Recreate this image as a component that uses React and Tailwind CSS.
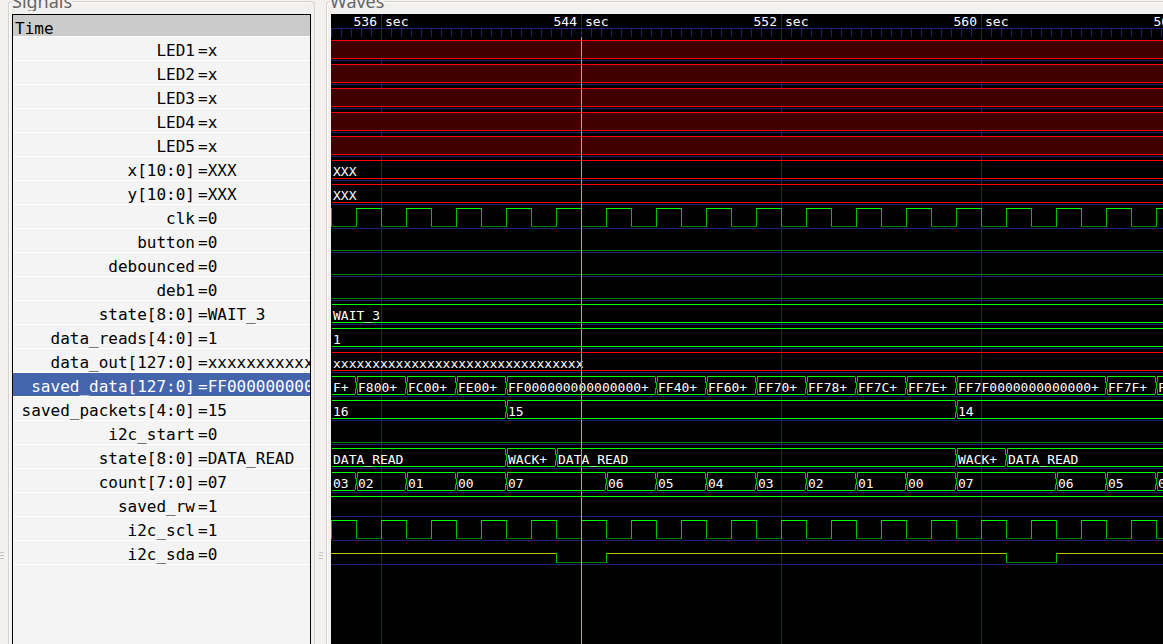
const STEP = 25;
const END = 1700;

const bus = (...segments) => ({ kind: "bus", segments });

const signals = [
  { name: "LED1", value: "x", wave: { kind: "unknown" } },
  { name: "LED2", value: "x", wave: { kind: "unknown" } },
  { name: "LED3", value: "x", wave: { kind: "unknown" } },
  { name: "LED4", value: "x", wave: { kind: "unknown" } },
  { name: "LED5", value: "x", wave: { kind: "unknown" } },
  { name: "x[10:0]", value: "XXX", wave: { ...bus([0, "XXX"]), undef: true } },
  { name: "y[10:0]", value: "XXX", wave: { ...bus([0, "XXX"]), undef: true } },
  { name: "clk", value: "0", wave: { kind: "clock", phase: 0 } },
  { name: "button", value: "0", wave: { kind: "low" } },
  { name: "debounced", value: "0", wave: { kind: "low" } },
  { name: "deb1", value: "0", wave: { kind: "low" } },
  { name: "state[8:0]", value: "WAIT_3", wave: bus([0, "WAIT_3"]) },
  { name: "data_reads[4:0]", value: "1", wave: bus([0, "1"]) },
  {
    name: "data_out[127:0]",
    value: "xxxxxxxxxxx",
    wave: { ...bus([0, "x".repeat(32)]), undef: true },
  },
  {
    name: "saved_data[127:0]",
    value: "FF000000000",
    selected: true,
    wave: bus(
      [0, "F+"],
      [25, "F800+"],
      [75, "FC00+"],
      [125, "FE00+"],
      [175, "FF000000000000000+"],
      [325, "FF40+"],
      [375, "FF60+"],
      [425, "FF70+"],
      [475, "FF78+"],
      [525, "FF7C+"],
      [575, "FF7E+"],
      [625, "FF7F0000000000000+"],
      [775, "FF7F+"],
      [825, "FF7F+"]
    ),
  },
  { name: "saved_packets[4:0]", value: "15", wave: bus([0, "16"], [175, "15"], [625, "14"]) },
  { name: "i2c_start", value: "0", wave: { kind: "low" } },
  {
    name: "state[8:0]",
    value: "DATA_READ",
    wave: bus([0, "DATA_READ"], [175, "WACK+"], [225, "DATA_READ"], [625, "WACK+"], [675, "DATA_READ"]),
  },
  {
    name: "count[7:0]",
    value: "07",
    wave: bus(
      [0, "03"],
      [25, "02"],
      [75, "01"],
      [125, "00"],
      [175, "07"],
      [275, "06"],
      [325, "05"],
      [375, "04"],
      [425, "03"],
      [475, "02"],
      [525, "01"],
      [575, "00"],
      [625, "07"],
      [725, "06"],
      [775, "05"],
      [825, "04"]
    ),
  },
  { name: "saved_rw", value: "1", wave: { kind: "high" } },
  { name: "i2c_scl", value: "1", wave: { kind: "clock", phase: 1 } },
  { name: "i2c_sda", value: "0", wave: { kind: "tristate", lows: [[225, 275], [675, 725]] } },
];

const H = ({ x1, x2, y, c }) => <rect x={x1} y={y} width={x2 - x1} height="1" fill={c} />;
const V = ({ x, y1, y2, c }) => <rect x={x} y={y1} width="1" height={y2 - y1} fill={c} />;

function Trace({ wave }) {
  switch (wave.kind) {
    case "unknown":
      return (
        <>
          <rect x="0" y="3" width={END} height="18" fill="#400000" />
          <H x1={0} x2={END} y={3} c="#ff0000" />
          <H x1={0} x2={END} y={21} c="#ff0000" />
        </>
      );
    case "low":
      return <H x1={0} x2={END} y={21} c="#008000" />;
    case "high":
      return <H x1={0} x2={END} y={3} c="#00ff00" />;
    case "clock":
      return Array.from({ length: END / STEP }, (_, i) => {
        const high = (i + wave.phase) % 2 === 1;
        return (
          <g key={i}>
            <V x={i * STEP} y1={3} y2={22} c="#00c000" />
            <H x1={i * STEP} x2={(i + 1) * STEP} y={high ? 3 : 21} c={high ? "#00ff00" : "#008000"} />
          </g>
        );
      });
    case "tristate": {
      let from = 0;
      const parts = [];
      wave.lows.forEach(([a, b]) => {
        parts.push(
          <g key={a}>
            <H x1={from} x2={a} y={12} c="#c0c000" />
            <H x1={a} x2={b} y={21} c="#008000" />
            <V x={a} y1={12} y2={22} c="#00c000" />
            <V x={b} y1={12} y2={22} c="#00c000" />
          </g>
        );
        from = b + 1;
      });
      return (
        <>
          {parts}
          <H x1={from} x2={END} y={12} c="#c0c000" />
        </>
      );
    }
    default: {
      const c = wave.undef ? "#ff0000" : "#00ff00";
      return wave.segments.map(([x], i) => {
        const next = wave.segments[i + 1];
        const x1 = i === 0 ? 1 : x + 2;
        const x2 = next ? next[0] - 1 : END;
        return (
          <g key={x}>
            <H x1={x1} x2={x2} y={3} c={c} />
            <H x1={x1} x2={x2} y={21} c={c} />
            {i > 0 && (
              <path
                d={`M${x - 1} 3.5L${x + 2} 21.5M${x + 2} 3.5L${x - 1} 21.5`}
                stroke="#00c000"
                fill="none"
                shapeRendering="crispEdges"
              />
            )}
          </g>
        );
      });
    }
  }
}

function WaveRow({ wave }) {
  const segments = wave.kind === "bus" ? wave.segments : [];
  return (
    <div className="relative h-6">
      <svg className="absolute inset-0 h-full w-full" aria-hidden="true">
        <H x1={0} x2={END} y={23} c="#202070" />
        <Trace wave={wave} />
      </svg>
      <div className="relative flex h-full overflow-hidden">
        {segments.map(([x, label], i) => {
          const next = segments[i + 1];
          return (
            <span
              key={x}
              className="shrink-0 pt-[5px] pl-0.5 leading-5 whitespace-nowrap"
              style={{ width: (next ? next[0] : END) - x }}
            >
              {label}
            </span>
          );
        })}
      </div>
    </div>
  );
}

const times = [536, 544, 552, 560, 568];

function TimeRuler() {
  return (
    <div className="relative h-[23px]">
      <svg className="absolute inset-0 h-full w-full" aria-hidden="true">
        <H x1={0} x2={END} y={14} c="#202070" />
        {Array.from({ length: END / 10 }, (_, i) => (
          <V key={i} x={i * 10} y1={14} y2={23} c="#202070" />
        ))}
      </svg>
      <div className="relative -ml-[50px] flex">
        {times.map((t) => (
          <div key={t} className="flex w-[200px] shrink-0 leading-4">
            <span className="w-24 text-right">{t}</span>
            <span className="pl-2">sec</span>
          </div>
        ))}
      </div>
    </div>
  );
}

function Grip() {
  return (
    <div className="flex w-1 flex-col gap-0.5" aria-hidden="true">
      <div className="h-px bg-[#c4c3c1]" />
      <div className="h-px bg-[#c4c3c1]" />
      <div className="h-px bg-[#c4c3c1]" />
    </div>
  );
}

function Title({ children }) {
  return (
    <h2 className="z-10 -mt-[11px] h-[22px] overflow-hidden pl-1 font-['Noto_Sans',sans-serif] text-[18px] leading-6 text-[#666]">
      <span className="bg-[#f2f1f0]">{children}</span>
    </h2>
  );
}

export default function App() {
  return (
    <main className="flex h-screen overflow-hidden bg-[#f2f1f0] font-['DejaVu_Sans_Mono',monospace] text-black">
      <div className="flex w-2 shrink-0 items-start pt-[552px]">
        <Grip />
      </div>
      <section className="flex w-[307px] shrink-0 flex-col">
        <Title>Signals</Title>
        <div className="-mt-2.5 flex flex-1 flex-col rounded-t border border-b-0 border-[#d3d2d0] px-[3px] pt-3 shadow-[inset_1px_1px_0_#fbfbfa]">
          <div className="flex-1 overflow-hidden border border-b-0 border-black bg-[#f4f4f4] text-[16px]">
            <div className="h-[22px] border-b border-white bg-[#cbcbcb] pt-0.5 pl-0.5 leading-6">Time</div>
            <ul>
              {signals.map((s, i) => (
                <li
                  key={i}
                  className={
                    s.selected
                      ? "flex h-6 border-b border-white bg-[#4464ac] pt-0.5 leading-6 text-white"
                      : "flex h-6 border-b border-white pt-0.5 leading-6"
                  }
                >
                  <span className="w-[182px] shrink-0 text-right">{s.name}</span>
                  <span className="min-w-0 flex-1 overflow-hidden pl-[3px] whitespace-nowrap">={s.value}</span>
                </li>
              ))}
            </ul>
          </div>
        </div>
      </section>
      <div className="flex w-[11px] shrink-0 items-start justify-center pt-[552px]">
        <Grip />
      </div>
      <section className="flex min-w-0 flex-1 flex-col">
        <Title>Waves</Title>
        <div className="-mt-2.5 flex flex-1 flex-col rounded-tl border-t border-l border-[#d3d2d0] pt-3 pl-1 shadow-[inset_1px_1px_0_#fbfbfa]">
          <div className="relative flex-1 overflow-hidden bg-black text-[13px] text-white">
            <svg className="absolute inset-0 h-full w-full" aria-hidden="true">
              {[50, 250, 450, 650, 850, 1050, 1250].map((x) => (
                <rect key={x} x={x} y="0" width="1" height="100%" fill="#202070" />
              ))}
            </svg>
            <TimeRuler />
            {signals.map((s, i) => (
              <WaveRow key={i} wave={s.wave} />
            ))}
            <div className="absolute top-[23px] bottom-0 left-[250px] w-px bg-[#ff8080]" />
          </div>
        </div>
      </section>
    </main>
  );
}
